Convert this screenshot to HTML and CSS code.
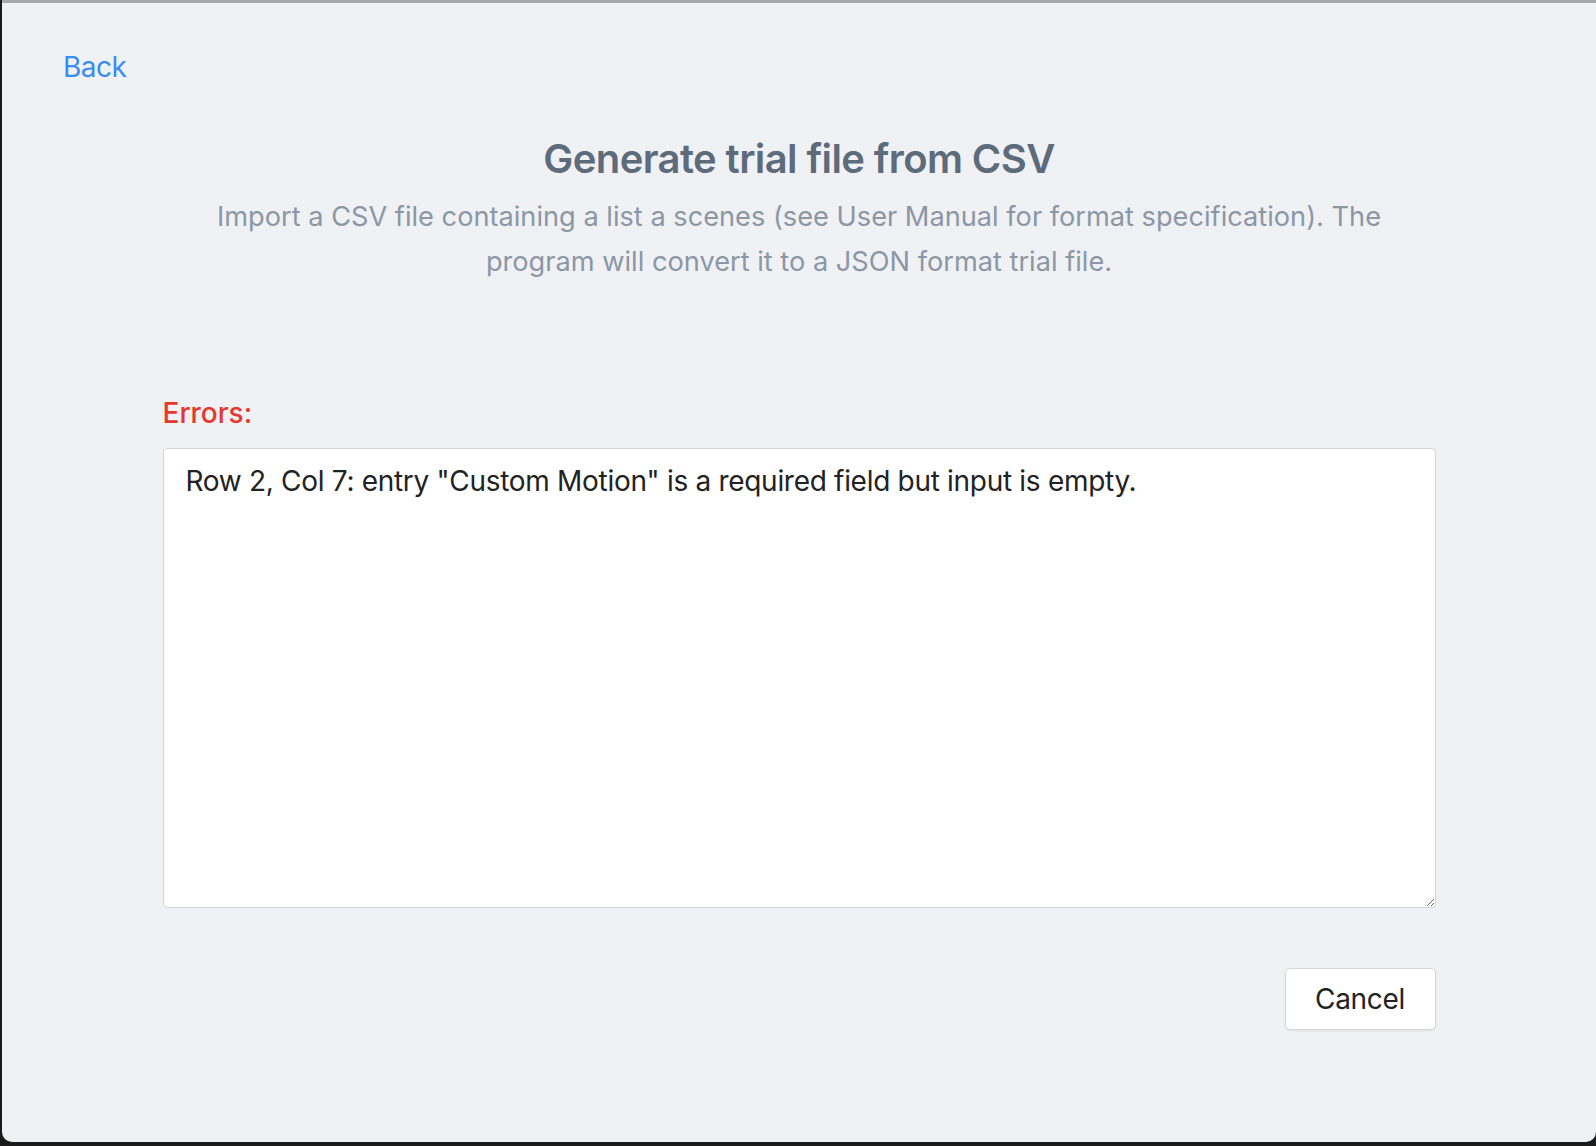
FILE: index.html
```html
<!DOCTYPE html>
<html lang="en">
<head>
<meta charset="utf-8">
<title>Generate trial file from CSV</title>
<link rel="stylesheet" href="styles.css">
</head>
<body>
<div class="window">
  <header class="topbar">
    <a class="back" href="#">Back</a>
  </header>
  <main class="content">
    <h1 class="title">Generate trial file from CSV</h1>
    <p class="subtitle">Import a CSV file containing a list a scenes (see User Manual for format specification). The program will convert it to a JSON format trial file.</p>
    <label class="errors-label" for="errors">Errors:</label>
    <textarea id="errors" class="errors" readonly>Row 2, Col 7: entry "Custom Motion" is a required field but input is empty.</textarea>
    <div class="actions">
      <button class="btn" type="button">Cancel</button>
    </div>
  </main>
</div>
</body>
</html>
```
FILE: styles.css
```css
html, body {
  margin: 0;
  padding: 0;
  height: 100%;
}
body {
  background: #1b1b1b;
  font-family: Inter, "Noto Sans", "Liberation Sans", sans-serif;
  overflow: hidden;
}
.window {
  margin-left: 2px;
  height: 1142px;
  box-sizing: border-box;
  border-top: 3px solid #a8a8a8;
  background: #f0f1f5;
  border-radius: 0 0 10px 10px;
  display: flex;
  flex-direction: column;
}
.topbar {
  padding: 48px 0 0 61px;
  line-height: 1.21;
}
.back {
  color: #3a8df0;
  font-size: 28px;
  letter-spacing: -0.5px;
  text-decoration: none;
}
.content {
  width: 1273px;
  margin: 0 auto;
  display: flex;
  flex-direction: column;
  align-items: center;
}
.title {
  margin: 50px 0 0;
  font-size: 40px;
  letter-spacing: -0.6px;
  line-height: 1.21;
  font-weight: 600;
  color: #5d6b7b;
  text-align: center;
}
.subtitle {
  margin: 12px 0 0;
  max-width: 1200px;
  font-size: 27.2px;
  line-height: 44.8px;
  color: #8b97a4;
  text-align: center;
}
.errors-label {
  align-self: flex-start;
  margin-top: 112px;
  font-size: 28px;
  line-height: 1.21;
  font-weight: 500;
  color: #e8372c;
}
.errors {
  margin-top: 17px;
  width: 1273px;
  height: 460px;
  box-sizing: border-box;
  border: 1px solid #d4d4d6;
  border-radius: 4px;
  background: #fff;
  padding: 11px 22px;
  font-family: inherit;
  font-size: 28px;
  letter-spacing: -0.3px;
  line-height: 42px;
  color: #222;
  outline: none;
}
.actions {
  align-self: stretch;
  display: flex;
  justify-content: flex-end;
  margin-top: 60px;
}
.btn {
  width: 151px;
  height: 62px;
  box-sizing: border-box;
  border: 1px solid #d6d6d8;
  border-radius: 5px;
  background: #fff;
  box-shadow: 0 1px 2px rgba(0, 0, 0, 0.08);
  font-family: inherit;
  font-size: 28px;
  letter-spacing: -0.3px;
  color: #222;
  cursor: pointer;
}
```
